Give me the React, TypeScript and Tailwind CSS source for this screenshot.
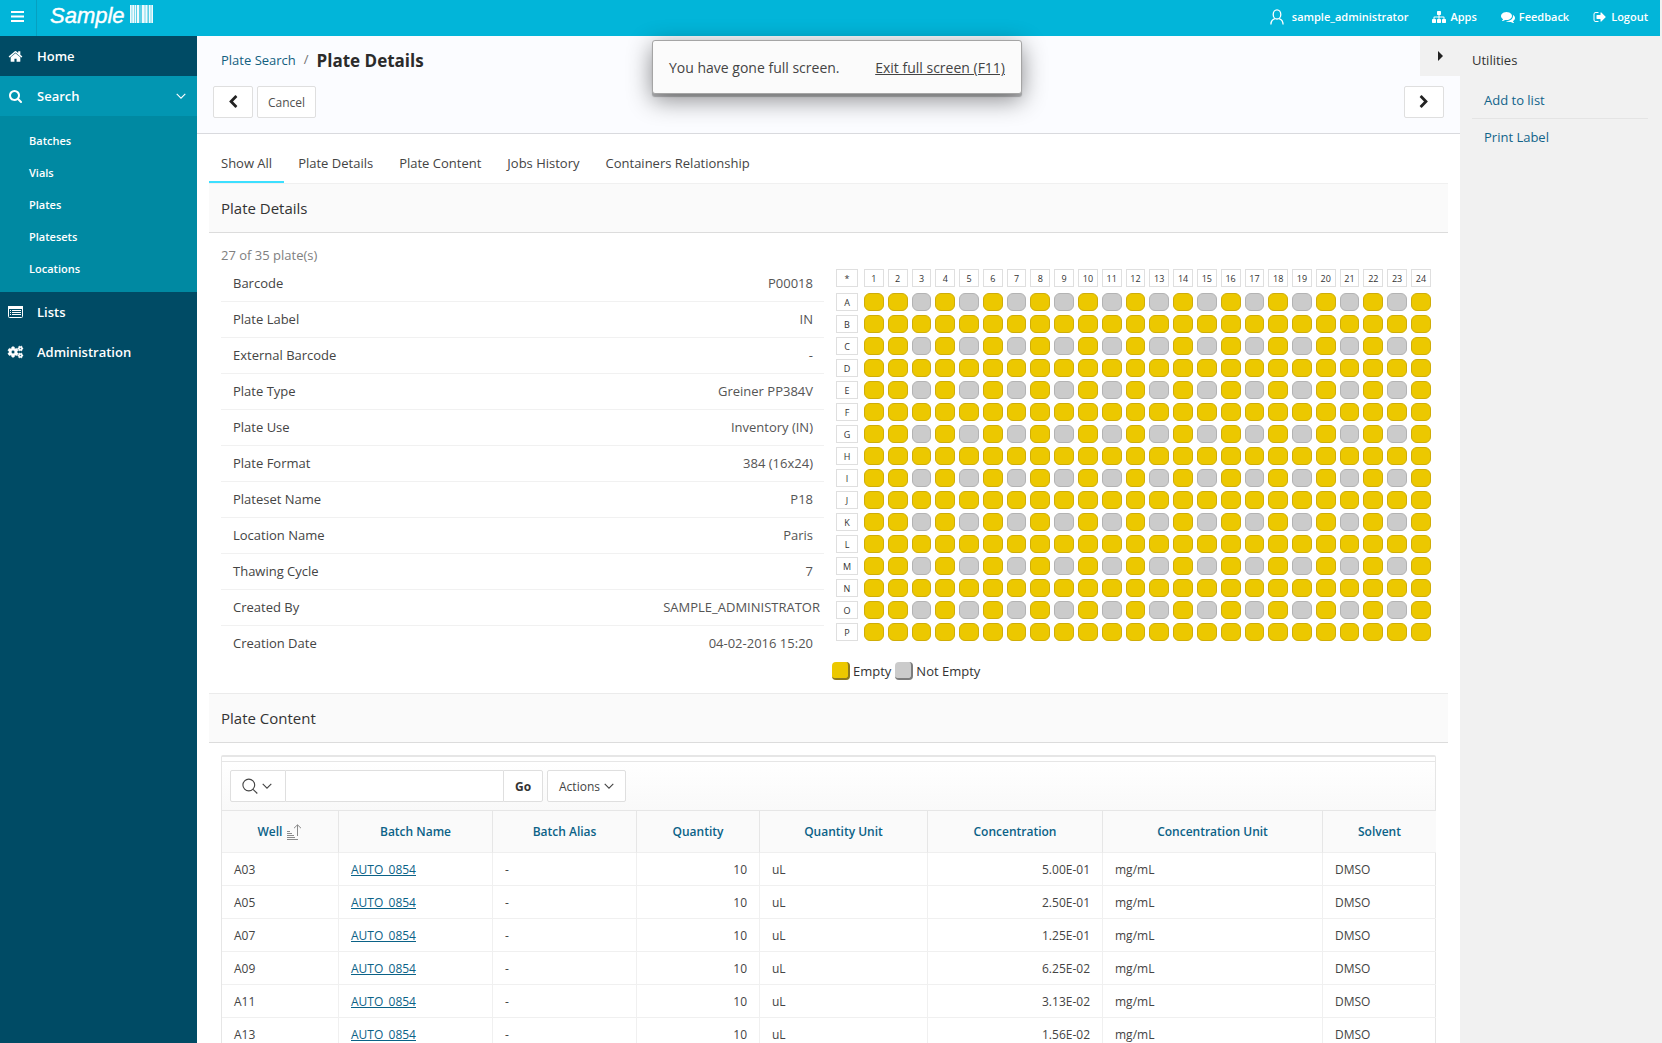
import React, { useState } from 'react';
import { FaCogs } from 'react-icons/fa';

const PATHS = {
  home: 'M1472 992v480q0 26-19 45t-45 19h-384v-384h-256v384h-384q-26 0-45-19t-19-45v-480q0-1 .5-3t.5-3l575-474 575 474q1 2 1 6zm223-69l-62 74q-8 9-21 11h-3q-13 0-21-7l-692-577-692 577q-12 8-24 7-13-2-21-11l-62-74q-8-10-7-23.5t11-21.5l719-599q32-26 76-26t76 26l244 204v-195q0-14 9-23t23-9h192q14 0 23 9t9 23v408l219 182q10 8 11 21.5t-7 23.5z',
  search: 'M1216 832q0-185-131.5-316.5t-316.5-131.5-316.5 131.5-131.5 316.5 131.5 316.5 316.5 131.5 316.5-131.5 131.5-316.5zm512 832q0 52-38 90t-90 38q-54 0-90-38l-343-342q-179 124-399 124-143 0-273.5-55.5t-225-150-150-225-55.5-273.5 55.5-273.5 150-225 225-150 273.5-55.5 273.5 55.5 225 150 150 225 55.5 273.5q0 220-124 399l343 343q37 37 37 90z',
  logout: 'M704 1440q0 4 1 20t.5 26.5-3 23.5-10 19.5-20.5 6.5h-320q-119 0-203.5-84.5t-84.5-203.5v-704q0-119 84.5-203.5t203.5-84.5h320q13 0 22.5 9.5t9.5 22.5q0 4 1 20t.5 26.5-3 23.5-10 19.5-20.5 6.5h-320q-66 0-113 47t-47 113v704q0 66 47 113t113 47h312l11.5 1 11.5 3 8 5.5 7 9 2 13.5zm928-544q0 26-19 45l-544 544q-19 19-45 19t-45-19-19-45v-288h-448q-26 0-45-19t-19-45v-384q0-26 19-45t45-19h448v-288q0-26 19-45t45-19 45 19l544 544q19 19 19 45z',
  comments: 'M1408 768q0 139-94 257t-256.5 186.5-353.5 68.5q-86 0-176-16-124 88-278 128-36 9-86 16h-3q-11 0-20.5-8t-11.5-21q-1-3-1-6.5t.5-6.5 2-6l2.5-5 3.5-5.5 4-5 4.5-5 4-4.5q5-6 23-25t26-29.5 22.5-29 25-38.5 20.5-44q-124-72-195-177t-71-224q0-139 94-257t256.5-186.5 353.5-68.5 353.5 68.5 256.5 186.5 94 257zm384 256q0 120-71 224.5t-195 176.5q10 24 20.5 44t25 38.5 22.5 29 26 29.5 23 25q1 1 4 4.5t4.5 5 4 5 3.5 5.5l2.5 5 2 6 .5 6.5-1 6.5q-3 14-13 22t-22 7q-50-7-86-16-154-40-278-128-90 16-176 16-271 0-472-132 58 4 88 4 161 0 309-45t264-129q125-92 192-212t67-254q0-77-23-152 129 71 204 178t75 230z',
  sitemap: 'M1792 1248v320q0 40-28 68t-68 28h-320q-40 0-68-28t-28-68v-320q0-40 28-68t68-28h96v-192h-512v192h96q40 0 68 28t28 68v320q0 40-28 68t-68 28h-320q-40 0-68-28t-28-68v-320q0-40 28-68t68-28h96v-192h-512v192h96q40 0 68 28t28 68v320q0 40-28 68t-68 28h-320q-40 0-68-28t-28-68v-320q0-40 28-68t68-28h96v-192q0-52 38-90t90-38h512v-192h-96q-40 0-68-28t-28-68v-320q0-40 28-68t68-28h320q40 0 68 28t28 68v320q0 40-28 68t-68 28h-96v192h512q52 0 90 38t38 90v192h96q40 0 68 28t28 68z',
  left: 'M1427 301l-531 531 531 531q19 19 19 45t-19 45l-166 166q-19 19-45 19t-45-19l-742-742q-19-19-19-45t19-45l742-742q19-19 45-19t45 19l166 166q19 19 19 45t-19 45z',
  right: 'M1363 877l-742 742q-19 19-45 19t-45-19l-166-166q-19-19-19-45t19-45l531-531-531-531q-19-19-19-45t19-45l166-166q19-19 45-19t45 19l742 742q19 19 19 45t-19 45z',
};

function Glyph({ name, className }: { name: keyof typeof PATHS; className: string }) {
  return (
    <svg viewBox="0 0 1792 1792" fill="currentColor" className={className} aria-hidden="true">
      <path d={PATHS[name]} />
    </svg>
  );
}

function ChevronDown({ className }: { className: string }) {
  return (
    <svg viewBox="0 0 10 6" fill="none" stroke="currentColor" strokeWidth="1.1" className={className} aria-hidden="true">
      <path d="M0.7 0.8 5 5.1 9.3 0.8" />
    </svg>
  );
}

const SUB_MENU = ['Batches', 'Vials', 'Plates', 'Platesets', 'Locations'];
const TABS = ['Show All', 'Plate Details', 'Plate Content', 'Jobs History', 'Containers Relationship'];

const DETAILS = [
  { label: 'Barcode', value: 'P00018' },
  { label: 'Plate Label', value: 'IN' },
  { label: 'External Barcode', value: '-' },
  { label: 'Plate Type', value: 'Greiner PP384V' },
  { label: 'Plate Use', value: 'Inventory (IN)' },
  { label: 'Plate Format', value: '384 (16x24)' },
  { label: 'Plateset Name', value: 'P18' },
  { label: 'Location Name', value: 'Paris' },
  { label: 'Thawing Cycle', value: '7' },
  { label: 'Created By', value: 'SAMPLE_ADMINISTRATOR', wide: true },
  { label: 'Creation Date', value: '04-02-2016 15:20' },
];

const ROWS = 'ABCDEFGHIJKLMNOP'.split('');
const COLS = Array.from({ length: 24 }, (_, i) => i + 1);

// Every second row is filled in the odd columns, starting from column 3
const isFilled = (row: number, col: number) => row % 2 === 0 && col > 1 && col % 2 === 1;

const HEADERS = [
  { title: 'Well', width: 'w-[117px]' },
  { title: 'Batch Name', width: 'w-[154px]' },
  { title: 'Batch Alias', width: 'w-[144px]' },
  { title: 'Quantity', width: 'w-[123px]' },
  { title: 'Quantity Unit', width: 'w-[168px]' },
  { title: 'Concentration', width: 'w-[175px]' },
  { title: 'Concentration Unit', width: 'w-[220px]' },
  { title: 'Solvent', width: 'w-[113px]' },
];

const WELLS = [
  { well: 'A03', conc: '5.00E-01' },
  { well: 'A05', conc: '2.50E-01' },
  { well: 'A07', conc: '1.25E-01' },
  { well: 'A09', conc: '6.25E-02' },
  { well: 'A11', conc: '3.13E-02' },
  { well: 'A13', conc: '1.56E-02' },
];

function Header() {
  return (
    <header className="flex h-9 shrink-0 items-center bg-[#02b5d9] text-white">
      <button aria-label="Toggle navigation" className="flex h-9 w-[37px] shrink-0 items-center justify-center border-r border-[#06a0c0] pr-0.5 pb-1">
        <svg viewBox="0 0 13 11" className="h-[11px] w-[13px]" fill="currentColor" aria-hidden="true">
          <path d="M0 0h13v2H0zM0 4.5h13v2H0zM0 9h13v2H0z" />
        </svg>
      </button>
      <a href="#" className="ml-[13px] flex h-9 items-start gap-[5px]">
        <span className="font-['Liberation_Sans',sans-serif] text-[22px] leading-8 italic [-webkit-text-stroke:0.4px_white]">Sample</span>
        <svg viewBox="0 0 23 18" className="mt-[5px] h-[18px] w-[23px]" fill="currentColor" aria-hidden="true">
          <path d="M0 0h1.6v18H0zM2.3 0h2v18h-2zM5 0h1v18H5zM7 0h2v18H7zM12 0h2.6v18H12zM15.4 0h2v18h-2zM19 0h1.6v18H19zM21.4 0H23v18h-1.6z" opacity=".9" />
          <path d="M0 0h23v18H0z" opacity=".35" />
        </svg>
      </a>
      <nav className="ml-auto flex items-center gap-6 pr-3 pb-0.5 text-[11px] leading-4 font-semibold">
        <a href="#" className="flex items-center gap-2">
          <svg viewBox="0 0 14 16" className="h-4 w-3.5" fill="none" stroke="currentColor" strokeWidth="1.3" aria-hidden="true">
            <ellipse cx="7" cy="5.4" rx="3.8" ry="4.6" />
            <path d="M4.9 9.6C2.3 10.4 1 11.8.9 15.5M9.1 9.6c2.6.8 3.9 2.2 4 5.9" />
          </svg>
          sample_administrator
        </a>
        <a href="#" className="flex items-center gap-1">
          <Glyph name="sitemap" className="h-3.5 w-3.5" />Apps
        </a>
        <a href="#" className="flex items-center gap-1">
          <Glyph name="comments" className="h-3.5 w-3.5" />Feedback
        </a>
        <a href="#" className="flex items-center gap-1">
          <Glyph name="logout" className="h-3.5 w-3.5" />Logout
        </a>
      </nav>
    </header>
  );
}

function Sidebar() {
  return (
    <nav className="w-[197px] shrink-0 bg-[#004b65] text-[13px] leading-5 font-semibold text-white">
      <a href="#" className="flex h-10 items-center gap-3.5 pl-2">
        <Glyph name="home" className="h-[15px] w-[15px]" />Home
      </a>
      <button className="flex h-10 w-full items-center gap-3.5 bg-[#0296b2] pr-[11px] pl-2">
        <Glyph name="search" className="h-3.5 w-[15px]" />
        Search
        <ChevronDown className="ml-auto h-1.5 w-2.5" />
      </button>
      <ul className="bg-[#0089a2] py-2 text-[11px]">
        {SUB_MENU.map((item) => (
          <li key={item}>
            <a href="#" className="flex h-8 items-center pt-0.5 pl-[29px]">{item}</a>
          </li>
        ))}
      </ul>
      <a href="#" className="flex h-10 items-center gap-3.5 pl-2">
        <svg viewBox="0 0 15 12" className="h-3 w-[15px]" aria-hidden="true">
          <rect x=".5" y=".5" width="14" height="11" rx="1" fill="none" stroke="currentColor" />
          <path fill="currentColor" d="M0 0h15v3H0zM2 4h1v1H2zM4 4h9v1H4zM2 6h1v1H2zM4 6h9v1H4zM2 8h1v1H2zM4 8h9v1H4z" />
        </svg>
        Lists
      </a>
      <a href="#" className="flex h-10 items-center gap-3.5 pl-2">
        <FaCogs className="h-4 w-[15px] overflow-visible" strokeWidth="20" stroke="currentColor" />Administration
      </a>
    </nav>
  );
}

function TitleBar() {
  return (
    <div className="flex h-[98px] flex-col border-b border-[#d9dade] bg-[#fbfcff] pt-3">
      <div className="flex h-6 items-center pl-6">
        <a href="#" className="text-[13px] leading-5 text-[#12607f]">Plate Search</a>
        <span className="px-2 text-[13px] text-[#707070]">/</span>
        <h1 className="pt-0.5 text-[17px] leading-6 font-bold text-[#2b2b2b]">Plate Details</h1>
      </div>
      <div className="mt-3.5 flex gap-1 px-4 text-[#222]">
        <button aria-label="Previous plate" className="flex h-8 w-10 items-center justify-center rounded-xs border border-[#dfdfdf] bg-white">
          <Glyph name="left" className="h-3.5 w-3.5" />
        </button>
        <button className="h-8 rounded-xs border border-[#dfdfdf] bg-white px-2.5 pt-0.5 text-[12px] text-[#505050]">Cancel</button>
        <button aria-label="Next plate" className="ml-auto flex h-8 w-10 items-center justify-center rounded-xs border border-[#dfdfdf] bg-white">
          <Glyph name="right" className="h-3.5 w-3.5" />
        </button>
      </div>
    </div>
  );
}

function PlateMap() {
  return (
    <div className="w-[603px] shrink-0">
      <table className="w-full table-fixed border-separate border-spacing-x-1 border-spacing-y-0 text-center text-[9px] leading-4 text-[#333]">
        <thead>
          <tr className="h-6">
            <th className="w-6 p-0 align-top font-normal">
              <span className="block h-[18px] w-[22px] border border-[#dfdfdf] pt-px">*</span>
            </th>
            {COLS.map((c) => (
              <th key={c} scope="col" className="p-0 align-top font-normal">
                <span className="block h-[18px] border border-[#dfdfdf] pt-px">{c}</span>
              </th>
            ))}
          </tr>
        </thead>
        <tbody>
          {ROWS.map((letter, r) => (
            <tr key={letter} className="h-[22px]">
              <th scope="row" className="p-0 align-top font-normal">
                <span className="block h-[18px] w-[22px] border border-[#dfdfdf] pt-px">{letter}</span>
              </th>
              {COLS.map((c) => (
                <td key={c} className="p-0 align-top">
                  <span
                    className={`block h-[18px] rounded-[6px] border ${
                      isFilled(r, c) ? 'border-[#b3b3b3] bg-[#cbcbcb]' : 'border-[#cfad08] bg-[#ecc800]'
                    }`}
                  />
                </td>
              ))}
            </tr>
          ))}
        </tbody>
      </table>
      <div className="mt-4 flex items-center gap-1 text-[13px] leading-5 text-[#333]">
        <span className="flex items-center gap-[3px]">
          <span className="h-[18px] w-[18px] rounded-[4px] border-r-2 border-b-2 border-[#8d7a20] bg-[#ecc800]" />
          Empty
        </span>
        <span className="flex items-center gap-[3px]">
          <span className="h-[18px] w-[18px] rounded-[4px] border-r-2 border-b-2 border-[#7d7d7d] bg-[#cbcbcb]" />
          Not Empty
        </span>
      </div>
    </div>
  );
}

function PlateDetails() {
  return (
    <section>
      <h2 className="h-[49px] border-b border-[#dcdcdc] bg-[#fafafa] pl-3 text-[15px] leading-[49px] text-[#333]">Plate Details</h2>
      <div className="flex h-[460px] pr-[13px] pl-3">
        <div className="min-w-0 grow pt-3">
          <p className="text-[13px] leading-[21px] text-[#808080]">27 of 35 plate(s)</p>
          <dl className="text-[13px] text-[#444]">
            {DETAILS.map((d) => (
              <div key={d.label} className="flex h-9 items-center justify-between border-b border-[#f1f1f1] pl-3 last:border-transparent">
                <dt>{d.label}</dt>
                <dd className={`text-[#555] ${d.wide ? 'pr-1' : 'pr-[11px]'}`}>{d.value}</dd>
              </div>
            ))}
          </dl>
        </div>
        <div className="ml-2 flex shrink-0 pt-9">
          <PlateMap />
        </div>
      </div>
    </section>
  );
}

function PlateContent() {
  const [search, setSearch] = useState('');

  return (
    <section>
      <h2 className="h-[50px] border-y border-t-[#ebebeb] border-b-[#dcdcdc] bg-[#fafafa] pl-3 text-[15px] leading-[49px] text-[#333]">Plate Content</h2>
      <div className="mx-3 mt-3 rounded-t-xs border border-t-2 border-[#e6e6e6]">
        <div className="h-1" />
        <div className="flex h-[50px] items-center border-y border-[#e6e6e6] bg-linear-to-b from-white to-[#f9f9f9] pl-2 text-[12px]">
          <button aria-label="Select columns to search" className="flex h-8 w-14 items-center justify-center gap-1 rounded-l-xs border border-[#dfdfdf] bg-white pr-0.5 text-[#444]">
            <svg viewBox="0 0 16 16" className="h-4 w-4" fill="none" stroke="currentColor" strokeWidth="1.1" aria-hidden="true">
              <circle cx="6.8" cy="7" r="5.9" />
              <path d="m11 11.3 4.3 4.2" />
            </svg>
            <ChevronDown className="h-1.5 w-2.5" />
          </button>
          <input
            aria-label="Search report"
            value={search}
            onChange={(e) => setSearch(e.target.value)}
            className="h-8 w-[217px] border-y border-[#dfdfdf] bg-white px-2 outline-none"
          />
          <button className="h-8 w-10 rounded-r-xs border border-[#dfdfdf] bg-white pt-0.5 font-bold text-[#333]">Go</button>
          <button className="ml-1 flex h-8 w-[79px] items-center justify-center gap-1 rounded-xs border border-[#dfdfdf] bg-white text-[#444]">
            <span className="pt-0.5">Actions</span>
            <ChevronDown className="h-1.5 w-2.5" />
          </button>
        </div>
        <table className="w-full table-fixed border-separate border-spacing-0 text-[12px] leading-4 text-[#444]">
          <thead>
            <tr className="h-[42px] bg-[#fafafa] text-[#0b6287]">
              {HEADERS.map((h, i) => (
                <th key={h.title} scope="col" className={`border-r border-b border-r-[#e6e6e6] border-b-[#efefef] p-0 font-semibold last:border-r-0 ${h.width}`}>
                  <a href="#" className="inline-flex items-center gap-1">
                    {h.title}
                    {i === 0 && (
                      <svg viewBox="0 0 16 16" className="h-4 w-4" fill="none" stroke="#8a8a8a" aria-hidden="true">
                        <path d="M1 7.5h3M1 9.5h5M1 11.5h7M1 13.5h8M1 15.5h11M11.5 12V1M8 4.2 11.5.8 15 4.2" />
                      </svg>
                    )}
                  </a>
                </th>
              ))}
            </tr>
          </thead>
          <tbody className="[&_td]:h-[33px] [&_td]:border-r [&_td]:border-b [&_td]:border-[#f0f0f0] [&_td]:px-3 [&_td]:pt-0.5 [&_td]:pb-0 [&_td:last-child]:border-r-0">
            {WELLS.map((w) => (
              <tr key={w.well}>
                <td>{w.well}</td>
                <td><a href="#" className="text-[#0b6287] underline">AUTO_0854</a></td>
                <td>-</td>
                <td className="text-right">10</td>
                <td>uL</td>
                <td className="text-right">{w.conc}</td>
                <td>mg/mL</td>
                <td>DMSO</td>
              </tr>
            ))}
          </tbody>
        </table>
      </div>
    </section>
  );
}

function Utilities() {
  return (
    <aside className="w-[200px] shrink-0 px-3 pt-3 text-[13px] leading-6">
      <h2 className="h-[34px] text-[#333]">Utilities</h2>
      <ul className="text-[#12648a]">
        <li className="border-b border-[#e4e4e4] px-3 py-1.5">
          <a href="#">Add to list</a>
        </li>
        <li className="px-3 py-1.5">
          <a href="#">Print Label</a>
        </li>
      </ul>
    </aside>
  );
}

export default function App() {
  const [tab, setTab] = useState(TABS[0]);

  return (
    <div className="relative flex h-screen flex-col overflow-hidden bg-[#f1f1f1] pr-0.5 font-['Segoe_UI','Open_Sans','Noto_Sans',sans-serif]">
      <Header />
      <div className="flex min-h-0 grow">
        <Sidebar />
        <main className="relative min-w-0 grow bg-white">
          <TitleBar />
          <div className="px-3">
            <div role="tablist" className="flex h-[50px] gap-0.5 border-b border-[#f0f0f0]">
              {TABS.map((t) => (
                <button
                  key={t}
                  role="tab"
                  aria-selected={t === tab}
                  onClick={() => setTab(t)}
                  className={`border-b-2 px-3 pt-2.5 text-[13px] leading-5 text-[#444] ${
                    t === tab ? 'border-[#3cdfff]' : 'border-transparent'
                  }`}
                >
                  {t}
                </button>
              ))}
            </div>
            <PlateDetails />
            <PlateContent />
          </div>
          {/* Collapse handle of the side column */}
          <button aria-label="Collapse utilities" className="absolute top-0 right-0 flex h-10 w-10 items-center justify-center bg-[#f1f1f1]">
            <svg viewBox="0 0 5 10" className="h-2.5 w-[5px]" fill="#222" aria-hidden="true">
              <path d="M0 0l5 5-5 5z" />
            </svg>
          </button>
        </main>
        <Utilities />
      </div>
      <div
        role="status"
        className="absolute top-10 left-[652px] flex h-[54px] w-[370px] items-center justify-between rounded-[3px] border border-[#a5a5a5] bg-[#fbfbfb] px-4 pt-0.5 text-[14px] leading-5 text-[#444] shadow-[0_3px_1px_rgba(0,0,0,0.25),0_6px_24px_rgba(0,0,0,0.45)]"
      >
        <span>You have gone full screen.</span>
        <a href="#" className="underline">Exit full screen (F11)</a>
      </div>
    </div>
  );
}
